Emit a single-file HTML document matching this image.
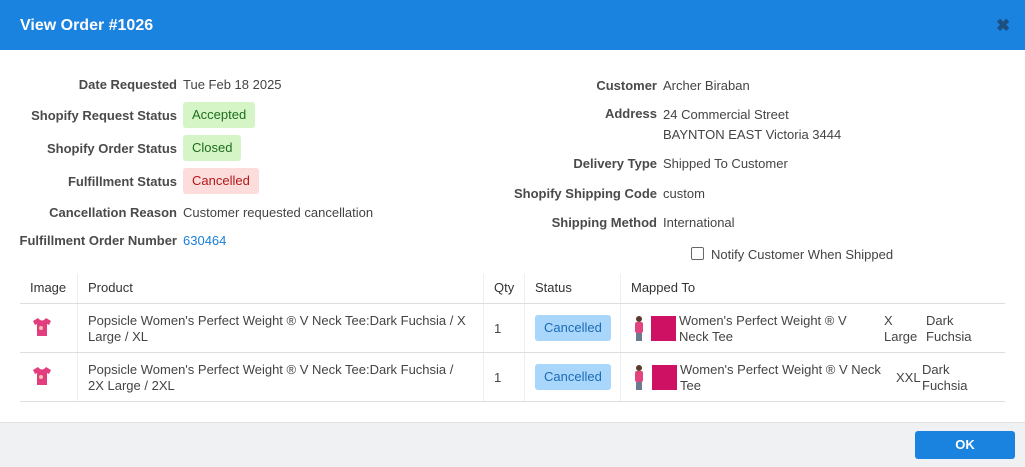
<!DOCTYPE html>
<html><head><style>
*{margin:0;padding:0;box-sizing:border-box}
body{width:1025px;height:467px;background:#fff;font-family:"Liberation Sans",Arial,sans-serif;font-size:13px;color:#444;position:relative;overflow:hidden}
.hd{position:absolute;left:0;top:0;width:1025px;height:50px;background:#1a82df}
.hd h1{position:absolute;left:20px;top:17px;font-size:16px;color:#fff;font-weight:bold}
.x{position:absolute;left:996px;top:16px;font-size:17px;font-weight:bold;color:#1d4f80}
.a{position:absolute;white-space:nowrap}
.l{font-weight:bold;color:#4a4a4a;text-align:right}
.b{position:absolute;padding:0 9px;height:26px;line-height:26px;border-radius:3px;font-size:13px}
.g{background:#d6f5c6;color:#1d6d1d}
.r{background:#fddcdc;color:#b21818}
.c{background:#a9d6fb;color:#1c6bb5;height:26px;line-height:26px}
.hl{position:absolute;left:20px;width:985px;height:1px;background:#dedede}
.vl{position:absolute;width:1px;background:#eee;top:274px;height:128px}
.ft{position:absolute;left:0;top:422px;width:1025px;height:45px;background:#f0f1f3;border-top:1px solid #e2e2e2}
.ok{position:absolute;left:915px;top:431px;width:100px;height:28px;background:#1a82df;color:#fff;font-weight:bold;text-align:center;line-height:28px;border-radius:3px}
.sw{position:absolute;width:25px;height:25px;background:#cf1164}
</style></head><body>
<div class="hd"><h1>View Order #1026</h1><div class="x">✖</div></div>

<div class="a l" style="right:848px;top:77px">Date Requested</div><div class="a" style="left:183px;top:77px">Tue Feb 18 2025</div>
<div class="a l" style="right:848px;top:108px">Shopify Request Status</div><div class="b g" style="left:183px;top:102px">Accepted</div>
<div class="a l" style="right:848px;top:141px">Shopify Order Status</div><div class="b g" style="left:183px;top:135px">Closed</div>
<div class="a l" style="right:848px;top:174px">Fulfillment Status</div><div class="b r" style="left:183px;top:168px">Cancelled</div>
<div class="a l" style="right:848px;top:205px">Cancellation Reason</div><div class="a" style="left:183px;top:205px">Customer requested cancellation</div>
<div class="a l" style="right:848px;top:233px">Fulfillment Order Number</div><div class="a" style="left:183px;top:233px;color:#1a7fd9">630464</div>

<div class="a l" style="right:368px;top:78px">Customer</div><div class="a" style="left:663px;top:78px">Archer Biraban</div>
<div class="a l" style="right:368px;top:106px">Address</div><div class="a" style="left:663px;top:105px;line-height:20px">24 Commercial Street<br>BAYNTON EAST Victoria 3444</div>
<div class="a l" style="right:368px;top:156px">Delivery Type</div><div class="a" style="left:663px;top:156px">Shipped To Customer</div>
<div class="a l" style="right:368px;top:186px">Shopify Shipping Code</div><div class="a" style="left:663px;top:186px">custom</div>
<div class="a l" style="right:368px;top:215px">Shipping Method</div><div class="a" style="left:663px;top:215px">International</div>
<div class="a" style="left:691px;top:247px;width:13px;height:13px;border:1px solid #666;border-radius:2px"></div>
<div class="a" style="left:711px;top:247px">Notify Customer When Shipped</div>

<div class="a" style="left:30px;top:280px;color:#333">Image</div>
<div class="a" style="left:88px;top:280px;color:#333">Product</div>
<div class="a" style="left:494px;top:280px;color:#333">Qty</div>
<div class="a" style="left:535px;top:280px;color:#333">Status</div>
<div class="a" style="left:631px;top:280px;color:#333">Mapped To</div>
<div class="vl" style="left:77px"></div><div class="vl" style="left:483px"></div><div class="vl" style="left:524px"></div><div class="vl" style="left:620px"></div>
<div class="hl" style="top:303px"></div><div class="hl" style="top:352px"></div><div class="hl" style="top:401px"></div>

<svg class="a" style="left:31px;top:316px" width="22" height="22" viewBox="0 0 22 22"><path d="M7 2 L2 5 L4 9 L6 8 L6 20 L16 20 L16 8 L18 9 L20 5 L15 2 Q11 7 7 2Z" fill="#e23d7e"/><circle cx="10" cy="12" r="2" fill="#f6c2a8"/></svg>
<svg class="a" style="left:31px;top:365px" width="22" height="22" viewBox="0 0 22 22"><path d="M7 2 L2 5 L4 9 L6 8 L6 20 L16 20 L16 8 L18 9 L20 5 L15 2 Q11 7 7 2Z" fill="#e23d7e"/><circle cx="10" cy="12" r="2" fill="#f6c2a8"/></svg>

<div class="a" style="left:88px;top:313px;line-height:16px">Popsicle Women's Perfect Weight ® V Neck Tee:Dark Fuchsia / X<br>Large / XL</div>
<div class="a" style="left:88px;top:362px;line-height:16px">Popsicle Women's Perfect Weight ® V Neck Tee:Dark Fuchsia /<br>2X Large / 2XL</div>
<div class="a" style="left:494px;top:321px">1</div><div class="a" style="left:494px;top:370px">1</div>
<div class="b c" style="left:535px;top:315px">Cancelled</div><div class="b c" style="left:535px;top:364px">Cancelled</div>

<svg class="a" style="left:633px;top:315px" width="12" height="26"><circle cx="6" cy="4" r="3" fill="#5a3a2a"/><rect x="2" y="7" width="8" height="11" rx="2" fill="#e2457d"/><rect x="3" y="18" width="6" height="8" fill="#6a7b8f"/></svg>
<svg class="a" style="left:633px;top:364px" width="12" height="26"><circle cx="6" cy="4" r="3" fill="#5a3a2a"/><rect x="2" y="7" width="8" height="11" rx="2" fill="#e2457d"/><rect x="3" y="18" width="6" height="8" fill="#6a7b8f"/></svg>
<div class="sw" style="left:651px;top:316px"></div><div class="sw" style="left:652px;top:365px"></div>
<div class="a" style="left:679px;top:313px;line-height:16px">Women's Perfect Weight ® V<br>Neck Tee</div>
<div class="a" style="left:884px;top:313px;line-height:16px">X<br>Large</div>
<div class="a" style="left:926px;top:313px;line-height:16px">Dark<br>Fuchsia</div>
<div class="a" style="left:680px;top:362px;line-height:16px">Women's Perfect Weight ® V Neck<br>Tee</div>
<div class="a" style="left:896px;top:370px">XXL</div>
<div class="a" style="left:922px;top:362px;line-height:16px">Dark<br>Fuchsia</div>

<div class="ft"></div>
<div class="ok">OK</div>
</body></html>
